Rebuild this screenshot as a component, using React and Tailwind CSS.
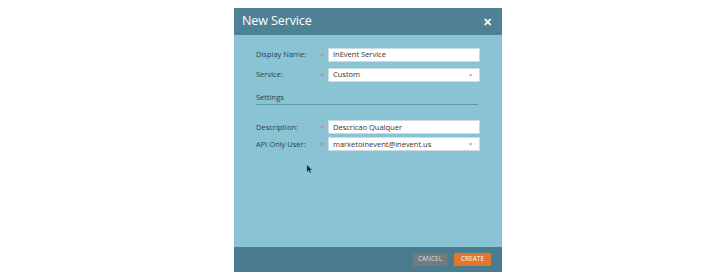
import React from "react";

const font = { fontFamily: '"Open Sans", "Noto Sans", Arial, sans-serif' };

function Row({ label, value, select }) {
  return (
    <div className="flex items-center h-[14px]">
      <div className="w-[64px] text-[7.5px] text-[#28434f]">{label}</div>
      <div className="w-[8px] text-[9px] leading-none text-[#c48892] pt-[2px]">*</div>
      <div className="w-[152px] h-[14px] bg-white border border-[#c9dde3] flex items-center justify-between pl-[4px] pr-[6px] text-[7.5px] text-[#333]">
        <span>{value}</span>
        {select && <span className="text-[5px] text-[#aaa] leading-none">▼</span>}
      </div>
    </div>
  );
}

export default function App() {
  return (
    <div className="w-[705px] h-[277px] bg-white relative" style={font}>
      <div className="pl-[234px] pt-[8px]">
        <div className="w-[268px] h-[264px] flex flex-col bg-[#8ac3d4]">
          <div className="h-[27px] bg-[#4e8196] flex items-center justify-between pl-[8px] pr-[10px]">
            <span className="text-white text-[12.5px] tracking-[-0.1px]">New Service</span>
            <span className="text-white text-[11px] font-bold leading-none">✕</span>
          </div>
          <div className="flex-1 pl-[22px] pt-[13px] flex flex-col">
            <div className="flex flex-col gap-[6px]">
              <Row label="Display Name:" value="InEvent Service" />
              <Row label="Service:" value="Custom" select />
            </div>
            <div className="mt-[10px] w-[222px] border-b-[1.5px] border-[#5f97a9] pb-[1px] text-[7.5px] text-[#28434f]">
              Settings
            </div>
            <div className="mt-[15px] flex flex-col gap-[3px]">
              <Row label="Description:" value="Descricao Qualquer" />
              <Row label="API Only User:" value="marketoinevent@inevent.us" select />
            </div>
          </div>
          <div className="h-[25px] bg-[#4b7b8e] flex items-center justify-end gap-[7px] pr-[11px]">
            <button className="w-[34px] h-[13px] bg-[#6f7c82] text-[#d8dcde] text-[6.5px] leading-none flex items-center justify-center">CANCEL</button>
            <button className="w-[37px] h-[13px] bg-[#e0772a] text-white text-[6.5px] leading-none flex items-center justify-center">CREATE</button>
          </div>
        </div>
      </div>
      <svg className="absolute left-[307px] top-[165px]" width="6" height="8" viewBox="0 0 6 8">
        <path d="M0 0 L0 7 L1.8 5.3 L3 8 L4 7.5 L2.8 5 L5 5 Z" fill="#1c2a30" />
      </svg>
    </div>
  );
}
